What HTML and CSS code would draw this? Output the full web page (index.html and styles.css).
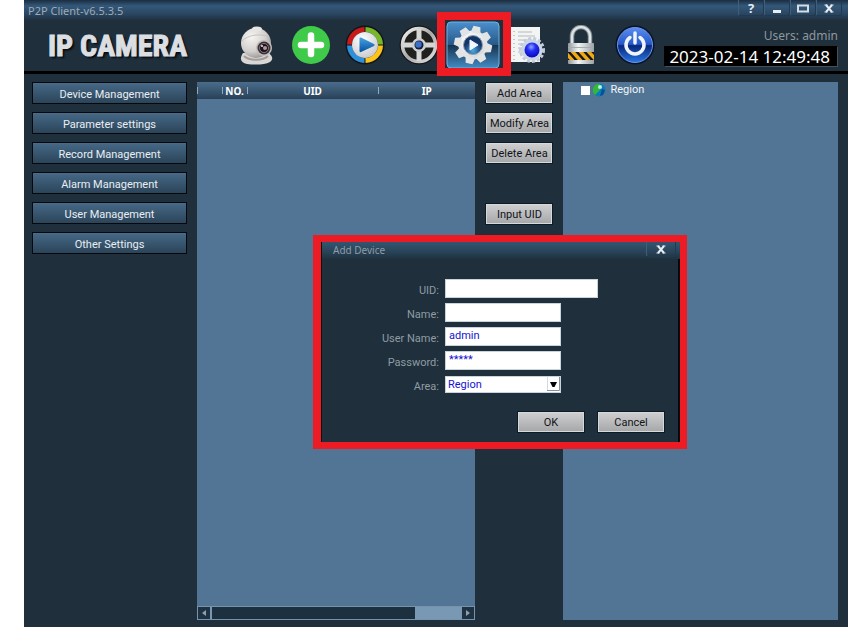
FILE: index.html
```html
<!DOCTYPE html>
<html lang="en">
<head>
<meta charset="utf-8">
<title>P2P Client-v6.5.3.5</title>
<link rel="stylesheet" href="styles.css">
</head>
<body>
<div class="app">
  <div class="titlebar">
    <span class="titlebar-text">P2P Client-v6.5.3.5</span>
    <div class="window-controls">
      <button class="win-btn" aria-label="Help">?</button>
      <button class="win-btn" aria-label="Minimize"><svg width="12" height="12" viewBox="0 0 12 12"><path d="M2 8h8v3H2z" fill="#e6edf3"/></svg></button>
      <button class="win-btn" aria-label="Maximize"><svg width="12" height="12" viewBox="0 0 12 12"><path d="M1 3.5h10v6H1z" fill="none" stroke="#d4dde5" stroke-width="2"/></svg></button>
      <button class="win-btn" aria-label="Close"><svg width="12" height="12" viewBox="0 0 12 12"><path d="M3 3l6 7M9 3l-6 7" stroke="#e6edf3" stroke-width="2"/><path d="M1.500 3h3M7.500 3h3M1.500 10h3M7.500 10h3" stroke="#e6edf3"/></svg></button>
    </div>
  </div>

  <header class="header">
    <h1 class="logo">IP CAMERA</h1>
    <nav class="toolbar">
      <button class="tool" aria-label="Camera">
        <svg width="38" height="40" viewBox="0 0 38 40">
          <defs><radialGradient id="cam" cx=".35" cy=".3" r=".8"><stop offset="0" stop-color="#f7f5f3"/><stop offset=".6" stop-color="#d2cfcc"/><stop offset="1" stop-color="#8c8987"/></radialGradient></defs>
          <path d="M5 28C1 34 3 38 9 39c7 1 18 1 23-2 4-3 2-7-2-9z" fill="#d9d7d5"/>
          <path d="M6 31c5 5 19 5 24 0" fill="none" stroke="#a09d9b" stroke-width="2"/>
          <circle cx="18" cy="18" r="15" fill="url(#cam)"/>
          <ellipse cx="19" cy="4" rx="5" ry="2.500" fill="#e8e6e4"/>
          <path d="M4 16c6-6 18-8 27-4" fill="none" stroke="#c5c2bf"/>
          <circle cx="26" cy="23" r="8" fill="#c3bfbd"/><circle cx="26" cy="23" r="6.500" fill="#383337"/>
          <circle cx="26" cy="23" r="4.500" fill="#17131a" stroke="#8b7079"/><circle cx="27" cy="23" r="2" fill="#b692a4"/>
          <circle cx="24" cy="21" r="1" fill="#eee"/>
        </svg>
      </button>
      <button class="tool" aria-label="Add">
        <svg width="40" height="40" viewBox="0 0 40 40"><circle cx="20" cy="20" r="19" fill="#40ca49"/><path d="M20 10.500v18.500M10 20h20" stroke="#fff" stroke-width="6.500" stroke-linecap="round"/></svg>
      </button>
      <button class="tool" aria-label="Playback">
        <svg width="40" height="40" viewBox="0 0 40 40">
          <defs><radialGradient id="disc" cx=".4" cy=".3" r=".7"><stop offset="0" stop-color="#fff"/><stop offset="1" stop-color="#c9ccd0"/></radialGradient><linearGradient id="pl" x2="0" y2="1"><stop offset="0" stop-color="#48a4df"/><stop offset="1" stop-color="#0750a4"/></linearGradient></defs>
          <circle cx="20" cy="20" r="19.500" fill="#10161b"/>
          <g fill="none" stroke-width="5"><path d="M19.500 4.500A15.500 15.500 0 0 0 4.500 19.500" stroke="#c91a1a"/><path d="M20.500 4.500A15.500 15.500 0 0 1 35.500 19.500" stroke="#78b72a"/><path d="M35.500 20.500A15.500 15.500 0 0 1 20.500 35.500" stroke="#fdc315"/><path d="M4.500 20.500A15.500 15.500 0 0 0 19.500 35.500" stroke="#2b91dc"/></g>
          <circle cx="20" cy="20" r="13" fill="url(#disc)"/><path d="M14.500 13.500q0-1.500 1.500-1l13 6.500q1.500 1 0 2l-13 6q-1.500.5-1.500-1z" fill="url(#pl)"/>
        </svg>
      </button>
      <button class="tool" aria-label="Pan and tilt">
        <svg width="40" height="40" viewBox="0 0 40 40">
          <defs><linearGradient id="rim" x2="1" y2="1"><stop offset="0" stop-color="#f5f5f5"/><stop offset=".5" stop-color="#aaa"/><stop offset="1" stop-color="#e1e1e1"/></linearGradient></defs>
          <circle cx="20" cy="20" r="19.500" fill="#151515"/><circle cx="20" cy="20" r="16.500" fill="#20201f" stroke="url(#rim)" stroke-width="3.500"/>
          <path d="M20 4v32M4 20h32" stroke="#d6d6d6" stroke-width="5"/>
          <circle cx="20" cy="20" r="7" fill="#cfcfcf"/><circle cx="20" cy="20" r="4.500" fill="#111d3a"/><circle cx="19.500" cy="19.500" r="3.200" fill="#3d6fc4"/>
        </svg>
      </button>
      <button class="tool tool-active" aria-label="Settings">
        <svg width="54" height="48" viewBox="0 0 54 48">
          <defs><linearGradient id="tile" x2="0" y2="1"><stop offset="0" stop-color="#4b8fcd"/><stop offset=".5" stop-color="#265887"/><stop offset=".51" stop-color="#17344f"/><stop offset="1" stop-color="#438cc4"/></linearGradient><linearGradient id="gr" x2="1" y2="1"><stop offset="0" stop-color="#fff"/><stop offset="1" stop-color="#cfd1d3"/></linearGradient><radialGradient id="hub" cy=".8"><stop offset="0" stop-color="#4ba9e2"/><stop offset="1" stop-color="#153568"/></radialGradient></defs>
          <rect x="1" y="1" width="52" height="46" rx="4" fill="url(#tile)" stroke="#73b3df"/>
          <g transform="translate(27 24) rotate(12)"><circle r="14.500" fill="url(#gr)"/><g fill="#e3e4e5"><path id="tooth" d="M-5-12l1.500-7h7L5-12z"/><use href="#tooth" transform="rotate(45)"/><use href="#tooth" transform="rotate(90)"/><use href="#tooth" transform="rotate(135)"/><use href="#tooth" transform="rotate(180)"/><use href="#tooth" transform="rotate(225)"/><use href="#tooth" transform="rotate(270)"/><use href="#tooth" transform="rotate(315)"/></g></g>
          <circle cx="27" cy="24" r="9.500" fill="url(#hub)" stroke="#8da1b4"/><path d="M24 19v10l8-5z" fill="#f3f8fd" stroke="#f3f8fd" stroke-linejoin="round"/>
        </svg>
      </button>
      <button class="tool" aria-label="Logs">
        <svg width="40" height="40" viewBox="0 0 40 40">
          <defs><radialGradient id="ball" cx=".45" cy=".3" r=".7"><stop offset="0" stop-color="#91a6ff"/><stop offset=".4" stop-color="#2430f6"/><stop offset="1" stop-color="#0a08b8"/></radialGradient></defs>
          <path d="M4 2h29v35H4z" fill="#f3f4f4"/><path d="M11 7h14M11 11h17M11 15h14M11 19h10M11 23h7M11 27h6" stroke="#b5b9bd"/><path d="M7 6v29" stroke="#999" stroke-dasharray="1 3"/>
          <circle cx="25" cy="25" r="11.500" fill="none" stroke="#c3ccda" stroke-width="3" stroke-dasharray="3 2"/><circle cx="25" cy="25" r="10.500" fill="#cbd5e5"/><circle cx="25" cy="25" r="7.500" fill="url(#ball)"/>
        </svg>
      </button>
      <button class="tool" aria-label="Lock">
        <svg width="40" height="40" viewBox="0 0 40 40">
          <defs><linearGradient id="met" x2="1"><stop offset="0" stop-color="#92999c"/><stop offset=".4" stop-color="#f1f4f4"/><stop offset="1" stop-color="#9ba2a5"/></linearGradient><clipPath id="band"><path d="M7 27h26v8H7z"/></clipPath></defs>
          <path d="M11 20v-9a9 9 0 0 1 18 0v9" fill="none" stroke="#7f8a90" stroke-width="4.500"/><path d="M11 20v-9a9 9 0 0 1 18 0v9" fill="none" stroke="#dce3e5" stroke-width="2.500"/>
          <rect x="7" y="18" width="26" height="21" rx="1" fill="url(#met)"/><path d="M7 22.500h26" stroke="#a4abad"/>
          <path d="M7 27h26v8H7z" fill="#171613"/><path clip-path="url(#band)" d="M3 26l9 10M11 26l9 10M19 26l9 10M27 26l9 10" stroke="#eda91a" stroke-width="3.500"/>
        </svg>
      </button>
      <button class="tool" aria-label="Exit">
        <svg width="40" height="40" viewBox="0 0 40 40">
          <defs><linearGradient id="pow" x2="0" y2="1"><stop offset="0" stop-color="#5c8df0"/><stop offset=".48" stop-color="#2458c9"/><stop offset=".52" stop-color="#082779"/><stop offset="1" stop-color="#2977e5"/></linearGradient></defs>
          <circle cx="20" cy="20" r="19.500" fill="#07132f"/><circle cx="20" cy="20" r="17.500" fill="url(#pow)" stroke="#6f97df"/>
          <path d="M15 12.500a9 9 0 1 0 10 0" fill="none" stroke="#eff4ff" stroke-width="3.500" stroke-linecap="round"/><path d="M20 8v10" stroke="#eff4ff" stroke-width="3.500" stroke-linecap="round"/>
        </svg>
      </button>
    </nav>
    <div class="status">
      <span class="user">Users: admin</span>
      <time class="clock">2023-02-14 12:49:48</time>
    </div>
  </header>

  <main class="content">
    <nav class="sidebar">
      <button class="side-btn">Device Management</button>
      <button class="side-btn">Parameter settings</button>
      <button class="side-btn">Record Management</button>
      <button class="side-btn">Alarm Management</button>
      <button class="side-btn">User Management</button>
      <button class="side-btn">Other Settings</button>
    </nav>

    <section class="panel devices">
      <table class="device-table">
        <thead><tr><th class="col-mark"></th><th class="col-no">NO.</th><th class="col-uid">UID</th><th>IP</th></tr></thead>
      </table>
      <div class="scrollbar">
        <button class="scroll-btn" aria-label="Scroll left"><svg width="6" height="8" viewBox="0 0 6 8"><path d="M5 1v6L1 4z" fill="#8fa0ac"/></svg></button>
        <div class="scroll-track"><div class="scroll-thumb"></div></div>
        <button class="scroll-btn" aria-label="Scroll right"><svg width="6" height="8" viewBox="0 0 6 8"><path d="M1 1v6l4-3z" fill="#8fa0ac"/></svg></button>
      </div>
    </section>

    <div class="actions">
      <button class="btn">Add Area</button>
      <button class="btn">Modify Area</button>
      <button class="btn">Delete Area</button>
      <button class="btn btn-apart">Input UID</button>
    </div>

    <section class="panel areas">
      <label class="tree-item">
        <input class="tree-check" type="checkbox">
        <svg width="14" height="14" viewBox="0 0 14 14"><circle cx="7" cy="7" r="6.500" fill="#087dbd"/><path d="M1 5c1-3 4-5 7-4L7 4l1 3-3 3-2 2C1 10 0 8 1 5z" fill="#35b63b"/><path d="M10 6l3 1-2 5-3 1z" fill="#0a4e93"/><circle cx="8" cy="4" r="2" fill="#b8f3e0"/></svg>
        <span>Region</span>
      </label>
    </section>
  </main>

  <section class="dialog" role="dialog" aria-labelledby="dialog-title">
    <div class="dialog-bar">
      <h2 class="dialog-title" id="dialog-title">Add Device</h2>
      <button class="win-btn dialog-close" aria-label="Close dialog"><svg width="12" height="12" viewBox="0 0 12 12"><path d="M3 3l6 7M9 3l-6 7" stroke="#e6edf3" stroke-width="2"/><path d="M1.500 3h3M7.500 3h3M1.500 10h3M7.500 10h3" stroke="#e6edf3"/></svg></button>
    </div>
    <form class="form">
      <label for="uid">UID:</label><input class="field field-wide" id="uid" type="text">
      <label for="name">Name:</label><input class="field" id="name" type="text">
      <label for="user">User Name:</label><input class="field" id="user" type="text" value="admin">
      <label for="pass">Password:</label><input class="field" id="pass" type="text" value="*****" autocomplete="off">
      <label for="area">Area:</label>
      <div class="select-box">
        <select class="field select" id="area"><option>Region</option></select>
        <svg class="select-arrow" width="13" height="14" viewBox="0 0 13 14"><path d="M0 0h13v14H0z" fill="#fff"/><path d="M.5 0v14" stroke="#d5dade"/><path d="M0 13.500H12.500V0" fill="none" stroke="#8a9299"/><path d="M3 5h7l-2.500 5h-2z" fill="#000"/></svg>
      </div>
      <div class="form-buttons">
        <button class="btn" type="button">OK</button>
        <button class="btn" type="button">Cancel</button>
      </div>
    </form>
  </section>
</div>
</body>
</html>
```

FILE: styles.css
```css
* { box-sizing: border-box; }

body {
  margin: 0;
  background: #fff;
  font-family: Roboto, "Noto Sans", sans-serif;
  font-size: 11px;
  line-height: 16px;
}

button, input, select {
  font: inherit;
  margin: 0;
  padding: 0;
  border: 0;
  border-radius: 0;
}

button {
  display: flex;
  align-items: center;
  justify-content: center;
  background: none;
}

.app {
  position: relative;
  display: flex;
  flex-direction: column;
  min-height: calc(100vh - 10px);
  margin: 0 12px 10px 24px;
  background: #1f2f3c;
}

.titlebar {
  display: flex;
  justify-content: space-between;
  height: 20px;
  padding: 0 6px 0 4px;
  background: linear-gradient(#1b2d40, #34587a 30%, #2a4661 70%, #1f3242);
}

.titlebar-text {
  padding-top: 3px;
  color: #9eabb5;
  font-family: "Noto Sans", sans-serif;
}

.window-controls { display: flex; }

.win-btn {
  width: 26px;
  height: 16px;
  border: 1px solid #223a50;
  border-top: 0;
  border-left-color: #3d607d;
  border-radius: 0 0 3px 3px;
  color: #e6edf3;
  font-family: "Noto Sans", sans-serif;
  font-size: 13px;
  font-weight: 700;
}

.header {
  display: flex;
  height: 54px;
  border-bottom: 3px solid #000;
}

.logo {
  width: 206px;
  margin: 0;
  padding-left: 24px;
  align-self: center;
  color: #dcdfe2;
  font: 700 30px/40px Impact, "Liberation Sans Narrow", "Roboto Condensed", "Liberation Sans", sans-serif;
  -webkit-text-stroke: 1px #dcdfe2;
  text-shadow: 2px 2px 2px #05090d;
  white-space: nowrap;
}

.toolbar { display: flex; }

.tool {
  position: relative;
  width: 54px;
  height: 50px;
}

.tool svg { flex: none; }

.tool-active::after {
  content: "";
  position: absolute;
  inset: -8px -11px -6px -9px;
  z-index: 1;
  border: 8px solid #ed1c24;
}

.status {
  display: flex;
  flex: 1;
  flex-direction: column;
  align-items: flex-end;
  gap: 2px;
  padding: 8px 10px 0 0;
}

.user {
  color: #8e979c;
  font-family: "Noto Sans", sans-serif;
  font-size: 12px;
}

.clock {
  padding: 0 7px 0 4px;
  border: 1px solid #42515c;
  border-top-color: #000;
  border-left-color: #000;
  background: #000;
  color: #fff;
  font-family: "Noto Sans", sans-serif;
  font-size: 17px;
  line-height: 19px;
  white-space: nowrap;
}

.content {
  display: grid;
  flex: 1;
  grid-template-columns: 155px 279fr 68px 275fr;
  gap: 10px;
  padding: 8px 10px 7px 8px;
}

.sidebar, .actions {
  display: flex;
  flex-direction: column;
  gap: 8px;
}

.side-btn {
  height: 22px;
  padding-top: 3px;
  border: 1px solid #05090d;
  box-shadow: inset 0 1px #4a6b87;
  background: linear-gradient(#466987, #2b4459);
  color: #e9eef2;
}

.panel { background: #527596; }

.devices {
  display: flex;
  flex-direction: column;
  justify-content: space-between;
}

.device-table {
  width: 100%;
  border-collapse: collapse;
  table-layout: fixed;
  background: linear-gradient(#4a6d8c, #294158);
  color: #fff;
}

.device-table th {
  height: 17px;
  padding: 0;
  background: linear-gradient(#8daabf, #8daabf) left center / 1px 7px no-repeat;
  font-family: "Noto Sans", sans-serif;
  font-size: 10px;
  line-height: 16px;
}

.col-mark, .col-no { width: 9%; }
.col-uid { width: 47%; }

.scrollbar {
  display: flex;
  height: 14px;
  border: 1px solid #7593ab;
  background: #7898b3;
}

.scroll-btn {
  width: 12px;
  background: #1f3243;
}

.scroll-track {
  flex: 1;
  padding-left: 2px;
}

.scroll-thumb {
  width: 81%;
  height: 12px;
  background: #1d3040;
}

.btn {
  width: 68px;
  height: 22px;
  padding-top: 2px;
  border: 1px solid #0b1c29;
  box-shadow: inset 0 0 0 1px #d6d8da;
  background: linear-gradient(#d0d0d1, #a5a6a8);
  color: #101418;
  white-space: nowrap;
}

.btn-apart { margin-top: 31px; }

.tree-item {
  display: flex;
  align-items: center;
  width: max-content;
  padding-left: 18px;
  color: #f1f5f8;
}

.tree-item svg { margin: 0 4px 0 2px; }

.tree-check {
  width: 9px;
  height: 9px;
  appearance: none;
  background: #fff;
}

.dialog {
  position: absolute;
  top: 235px;
  left: 289px;
  z-index: 2;
  width: 374px;
  border: 7px solid #ed1c24;
  border-left-width: 8px;
  background: #1f2f3c;
  box-shadow: inset 1px 0 #05090d, inset -2px 0 #05090d;
}

.dialog-bar {
  display: flex;
  justify-content: space-between;
  height: 17px;
  margin-left: 1px;
  padding: 0 4px 0 11px;
  background: linear-gradient(#345570, #2a465c 50%, #1f3240);
}

.dialog-title {
  margin: 0;
  color: #8f9ca5;
  font-family: "Noto Sans", sans-serif;
  font-size: 10px;
  font-weight: 400;
  line-height: 16px;
}

.dialog-close {
  width: 30px;
  height: 15px;
}

.form {
  display: grid;
  grid-template-columns: 118px 1fr;
  align-items: center;
  gap: 5px 6px;
  padding: 20px 15px 9px 0;
  color: #8f9ca3;
}

.form > label {
  padding-top: 4px;
  line-height: 15px;
  text-align: right;
}

.field {
  width: 116px;
  height: 19px;
  padding: 0 3px 2px;
  border: 1px solid #c7d4de;
  background: #fff;
  color: #1414cf;
}

.field-wide { width: 153px; }

.select-box {
  position: relative;
  display: flex;
  width: 116px;
}

.select {
  height: 17px;
  padding: 0 2px;
  appearance: none;
  line-height: 15px;
}

.select-arrow {
  position: absolute;
  top: 1px;
  right: 1px;
  pointer-events: none;
}

.form-buttons {
  display: flex;
  grid-column: 1 / -1;
  justify-content: flex-end;
  gap: 12px;
  padding-top: 12px;
}
```
